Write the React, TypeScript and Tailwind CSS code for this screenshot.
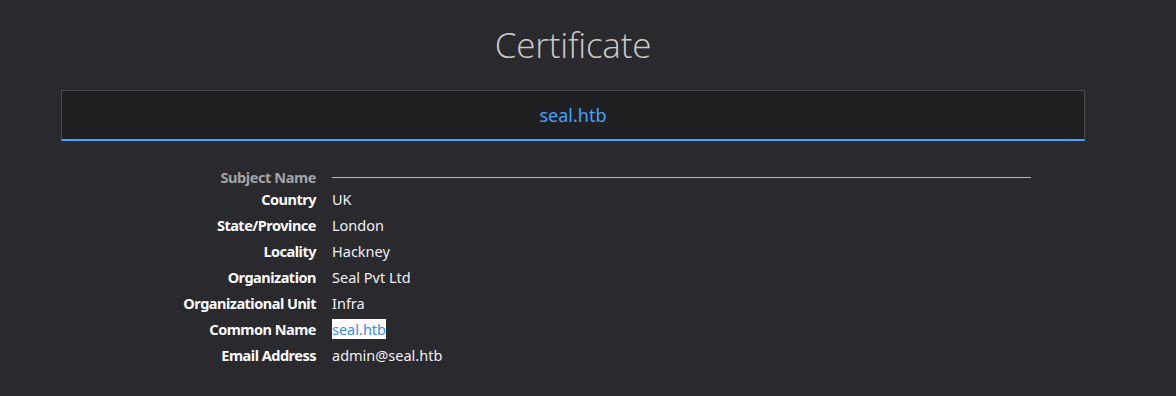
import React from "react";

const rows: [string, string][] = [
  ["Country", "UK"],
  ["State/Province", "London"],
  ["Locality", "Hackney"],
  ["Organization", "Seal Pvt Ltd"],
  ["Organizational Unit", "Infra"],
  ["Common Name", "seal.htb"],
  ["Email Address", "admin@seal.htb"],
];

export default function App() {
  return (
    <div
      className="w-[1176px] h-[396px] bg-[#2a2a2e] overflow-hidden"
      style={{ fontFamily: '"Noto Sans", "Open Sans", sans-serif' }}
    >
      <div className="w-[1146px] flex flex-col items-center">
        <h1
          className="mt-[22px] h-[46px] leading-[46px] text-[35px] font-light text-[#cacacc] tracking-[-0.2px]"
          style={{ fontFamily: '"Open Sans", sans-serif', fontWeight: 300 }}
        >
          Certificate
        </h1>
        <div className="mt-[22px] w-[1024px] h-[51px] bg-[#202022] border border-[#4c4c50] border-b-2 border-b-[#45a1ff] flex items-center justify-center">
          <span className="text-[18px] text-[#45a1ff] leading-[24px]">seal.htb</span>
        </div>
      </div>
      <div className="mt-[26px] flex flex-col text-[14.5px] leading-[20px]">
        <div className="flex items-center h-[20px]">
          <div className="w-[316px] text-right font-bold tracking-[-0.4px] text-[#a4a4a8]">Subject Name</div>
          <div className="ml-[16px] w-[699px] h-px bg-[#b8b8bc]" />
        </div>
        <div className="mt-[2px] flex flex-col gap-[6px]">
          {rows.map(([k, v]) => (
            <div key={k} className="flex h-[20px]">
              <div className="w-[316px] text-right font-bold tracking-[-0.5px] text-[#fbfbfe]">{k}</div>
              <div className="ml-[16px] text-[#f0f0f3]">
                {k === "Common Name" ? (
                  <span className="bg-white text-[#3b8cf0]">{v}</span>
                ) : (
                  v
                )}
              </div>
            </div>
          ))}
        </div>
      </div>
    </div>
  );
}
